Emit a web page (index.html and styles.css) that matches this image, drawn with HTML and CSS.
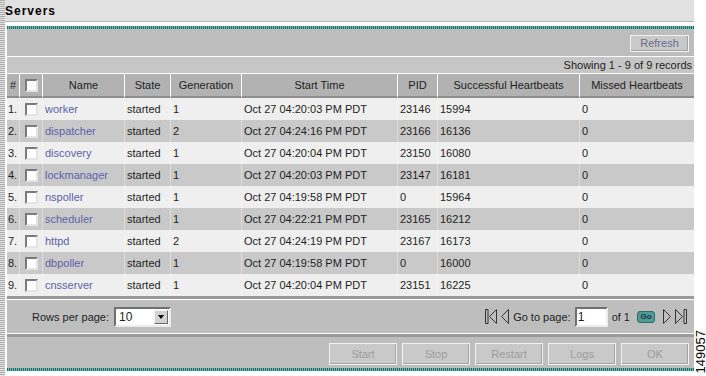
FILE: index.html
```html
<!DOCTYPE html>
<html lang="en">

<head>
    <meta charset="UTF-8">
    <title>Servers</title>
    <link rel="stylesheet" href="styles.css">
</head>

<body>
    <div class="page">
        <div class="stripe"></div>
        <div class="main">
            <div class="title-bar">Servers</div>
            <div class="panel">
                <div class="band"></div>
                <div class="toolbar">
                    <button class="btn refresh">Refresh</button>
                </div>
                <div class="status">Showing 1 - 9 of 9 records</div>
                <table class="grid">
                    <colgroup>
                        <col style="width:12px">
                        <col style="width:23px">
                        <col style="width:82px">
                        <col style="width:46px">
                        <col style="width:71px">
                        <col style="width:156px">
                        <col style="width:40px">
                        <col style="width:142px">
                        <col style="width:115px">
                    </colgroup>
                    <thead>
                        <tr>
                            <th>#</th>
                            <th><span class="check"></span></th>
                            <th>Name</th>
                            <th>State</th>
                            <th>Generation</th>
                            <th>Start Time</th>
                            <th>PID</th>
                            <th>Successful Heartbeats</th>
                            <th>Missed Heartbeats</th>
                        </tr>
                    </thead>
                    <tbody>
                        <tr><td>1.</td><td class="cb"><span class="check"></span></td><td><a href="#">worker</a></td><td>started</td><td>1</td><td>Oct 27 04:20:03 PM PDT</td><td>23146</td><td>15994</td><td>0</td></tr>
                        <tr><td>2.</td><td class="cb"><span class="check"></span></td><td><a href="#">dispatcher</a></td><td>started</td><td>2</td><td>Oct 27 04:24:16 PM PDT</td><td>23166</td><td>16136</td><td>0</td></tr>
                        <tr><td>3.</td><td class="cb"><span class="check"></span></td><td><a href="#">discovery</a></td><td>started</td><td>1</td><td>Oct 27 04:20:04 PM PDT</td><td>23150</td><td>16080</td><td>0</td></tr>
                        <tr><td>4.</td><td class="cb"><span class="check"></span></td><td><a href="#">lockmanager</a></td><td>started</td><td>1</td><td>Oct 27 04:20:03 PM PDT</td><td>23147</td><td>16181</td><td>0</td></tr>
                        <tr><td>5.</td><td class="cb"><span class="check"></span></td><td><a href="#">nspoller</a></td><td>started</td><td>1</td><td>Oct 27 04:19:58 PM PDT</td><td>0</td><td>15964</td><td>0</td></tr>
                        <tr><td>6.</td><td class="cb"><span class="check"></span></td><td><a href="#">scheduler</a></td><td>started</td><td>1</td><td>Oct 27 04:22:21 PM PDT</td><td>23165</td><td>16212</td><td>0</td></tr>
                        <tr><td>7.</td><td class="cb"><span class="check"></span></td><td><a href="#">httpd</a></td><td>started</td><td>2</td><td>Oct 27 04:24:19 PM PDT</td><td>23167</td><td>16173</td><td>0</td></tr>
                        <tr><td>8.</td><td class="cb"><span class="check"></span></td><td><a href="#">dbpoller</a></td><td>started</td><td>1</td><td>Oct 27 04:19:58 PM PDT</td><td>0</td><td>16000</td><td>0</td></tr>
                        <tr><td>9.</td><td class="cb"><span class="check"></span></td><td><a href="#">cnsserver</a></td><td>started</td><td>1</td><td>Oct 27 04:20:04 PM PDT</td><td>23151</td><td>16225</td><td>0</td></tr>
                    </tbody>
                </table>
                <div class="pager">
                    <div class="rows">
                        Rows per page:
                        <span class="select"><span class="val">10</span><span class="arrow"></span></span>
                    </div>
                    <div class="nav">
                        <svg class="first" width="12" height="15" viewBox="0 0 12 15"><path d="M0.5 0.5h2.5v14h-2.5z M11.5 0.5 L4.5 7.5 L11.5 14.5z" fill="none" stroke="#333"/></svg>
                        <svg class="prev" width="8" height="15" viewBox="0 0 8 15"><path d="M7.5 0.5 L0.5 7.5 L7.5 14.5z" fill="none" stroke="#333"/></svg>
                        <span>Go to page:</span>
                        <span class="page-input">1</span>
                        <span>of 1</span>
                        <button class="go">Go</button>
                        <svg class="next" width="8" height="15" viewBox="0 0 8 15"><path d="M0.5 0.5 L7.5 7.5 L0.5 14.5z" fill="none" stroke="#333"/></svg>
                        <svg class="last" width="12" height="15" viewBox="0 0 12 15"><path d="M0.5 0.5 L7.5 7.5 L0.5 14.5z M9 0.5h2.5v14h-2.5z" fill="none" stroke="#333"/></svg>
                    </div>
                </div>
                <div class="actions">
                    <button class="btn action">Start</button>
                    <button class="btn action">Stop</button>
                    <button class="btn action">Restart</button>
                    <button class="btn action">Logs</button>
                    <button class="btn action">OK</button>
                </div>
                <div class="band"></div>
            </div>
        </div>
        <div class="side"><span class="fig-id">149057</span></div>
    </div>
</body>

</html>
```

FILE: styles.css
```css
body,
html {
    margin: 0;
    padding: 0;
    font-family: "Liberation Sans", Arial, sans-serif;
    font-size: 11px;
    color: #1e1e1e;
    background-color: #fff;
}

.page {
    display: flex;
    height: 376px;
    overflow: hidden;
}

.stripe {
    flex: 0 0 5px;
    background: repeating-linear-gradient(180deg, #a9a9a9 0 1px, #e6e6e6 1px 2px);
}

.main {
    flex: 0 0 689px;
    display: flex;
    flex-direction: column;
}

.title-bar {
    height: 19px;
    padding-top: 2px;
    line-height: 19px;
    background: #e1e1e1;
    border-bottom: 1px solid #b4b4b4;
    font-size: 12px;
    font-weight: bold;
    letter-spacing: 1px;
    color: #000;
}

.panel {
    margin: 4px 0 0 2px;
}

.band {
    height: 3px;
    background: repeating-linear-gradient(90deg, #1d6f6a 0 1px, #75b8b0 1px 2px);
}

.toolbar {
    height: 27px;
    background: #bdbdbd;
    border-bottom: 1px solid #fff;
    display: flex;
    justify-content: flex-end;
    align-items: center;
    padding-right: 5px;
}

.btn {
    font-family: "Liberation Sans", Arial, sans-serif;
    font-size: 11px;
    background: #c9c9c9;
    border: 1px solid #f2f2f2;
    box-shadow: inset -1px -1px #a4a4a4;
    padding: 0;
    cursor: pointer;
}

.refresh {
    width: 59px;
    height: 17px;
    color: #6a6c8c;
    margin-top: 1px;
}

.status {
    height: 16px;
    line-height: 16px;
    background: #c6c6c6;
    border-bottom: 1px solid #fff;
    text-align: right;
    padding-right: 2px;
}

.grid {
    width: 687px;
    table-layout: fixed;
    border-spacing: 0;
}

.grid th {
    padding: 0;
    background: #b2b2b2;
    font-weight: normal;
    border-left: 1px solid #fff;
    border-bottom: 2px solid #8e8e8e;
    box-sizing: border-box;
    height: 24px;
}

.grid th:first-child {
    border-left: 0;
}

.grid td {
    height: 22px;
    padding: 0 0 0 2px;
    white-space: nowrap;
    border-left: 1px solid rgba(255, 255, 255, 0.35);
}

.grid td:first-child {
    border-left: 0;
    padding-left: 1px;
}

.grid td.cb {
    text-align: center;
    padding: 0;
}

.grid tbody tr:nth-child(odd) td {
    background: #efefef;
}

.grid tbody tr:nth-child(even) td {
    background: #c9c9c9;
}

.grid a {
    color: #5e5fa9;
    text-decoration: none;
}

.check {
    display: inline-block;
    width: 9px;
    height: 9px;
    background: #fff;
    border: 2px solid;
    border-color: #7a7a7a #e4e4e4 #e4e4e4 #7a7a7a;
    vertical-align: middle;
}

.pager {
    height: 33px;
    background: #bebebe;
    border-top: 3px solid #9a9a9a;
    border-bottom: 1px solid #fff;
    box-shadow: inset 0 1px #fff;
    display: flex;
    align-items: center;
    justify-content: space-between;
    padding: 1px 7px 0 25px;
}

.rows {
    display: flex;
    align-items: center;
    gap: 5px;
}

.select {
    display: inline-flex;
    align-items: center;
    justify-content: space-between;
    width: 57px;
    height: 20px;
    box-sizing: border-box;
    background: #fff;
    border: 2px solid;
    border-color: #707070 #ececec #ececec #707070;
}

.select .val {
    font-size: 12px;
    padding-left: 3px;
}

.select .arrow {
    position: relative;
    width: 12px;
    height: 12px;
    margin-right: 1px;
    background: #d2d2d2;
    border: 1px solid;
    border-color: #f4f4f4 #6a6a6a #6a6a6a #f4f4f4;
}

.select .arrow::after {
    content: "";
    position: absolute;
    left: 3px;
    top: 4px;
    border-left: 3px solid transparent;
    border-right: 3px solid transparent;
    border-top: 4px solid #000;
}

.nav {
    display: flex;
    align-items: center;
    gap: 4px;
}

.page-input {
    width: 28px;
    height: 16px;
    line-height: 16px;
    padding-left: 1px;
    background: #fff;
    border: 2px solid;
    border-color: #707070 #ececec #ececec #707070;
    font-size: 12px;
}

.go {
    width: 18px;
    height: 12px;
    margin: 0 4px 0 3px;
    padding: 0;
    background: #4f9a92;
    border: 1px solid #2f6d67;
    border-radius: 3px;
    font-family: "Liberation Sans", Arial, sans-serif;
    font-size: 8px;
    font-weight: bold;
    line-height: 10px;
    color: #173650;
}

.actions {
    height: 31px;
    background: #bebebe;
    border-top: 3px solid #9a9a9a;
    display: flex;
    justify-content: flex-end;
    align-items: center;
    gap: 5px;
    padding-right: 5px;
}

.action {
    width: 68px;
    height: 22px;
    color: #9c9c9c;
    margin-top: 3px;
}

.side {
    flex: 1 1 auto;
    min-width: 0;
    display: flex;
    flex-direction: column;
    justify-content: flex-end;
    align-items: center;
    padding-bottom: 3px;
}

.fig-id {
    writing-mode: vertical-rl;
    transform: rotate(180deg);
    font-size: 13px;
    line-height: 11px;
    color: #000;
}
```
